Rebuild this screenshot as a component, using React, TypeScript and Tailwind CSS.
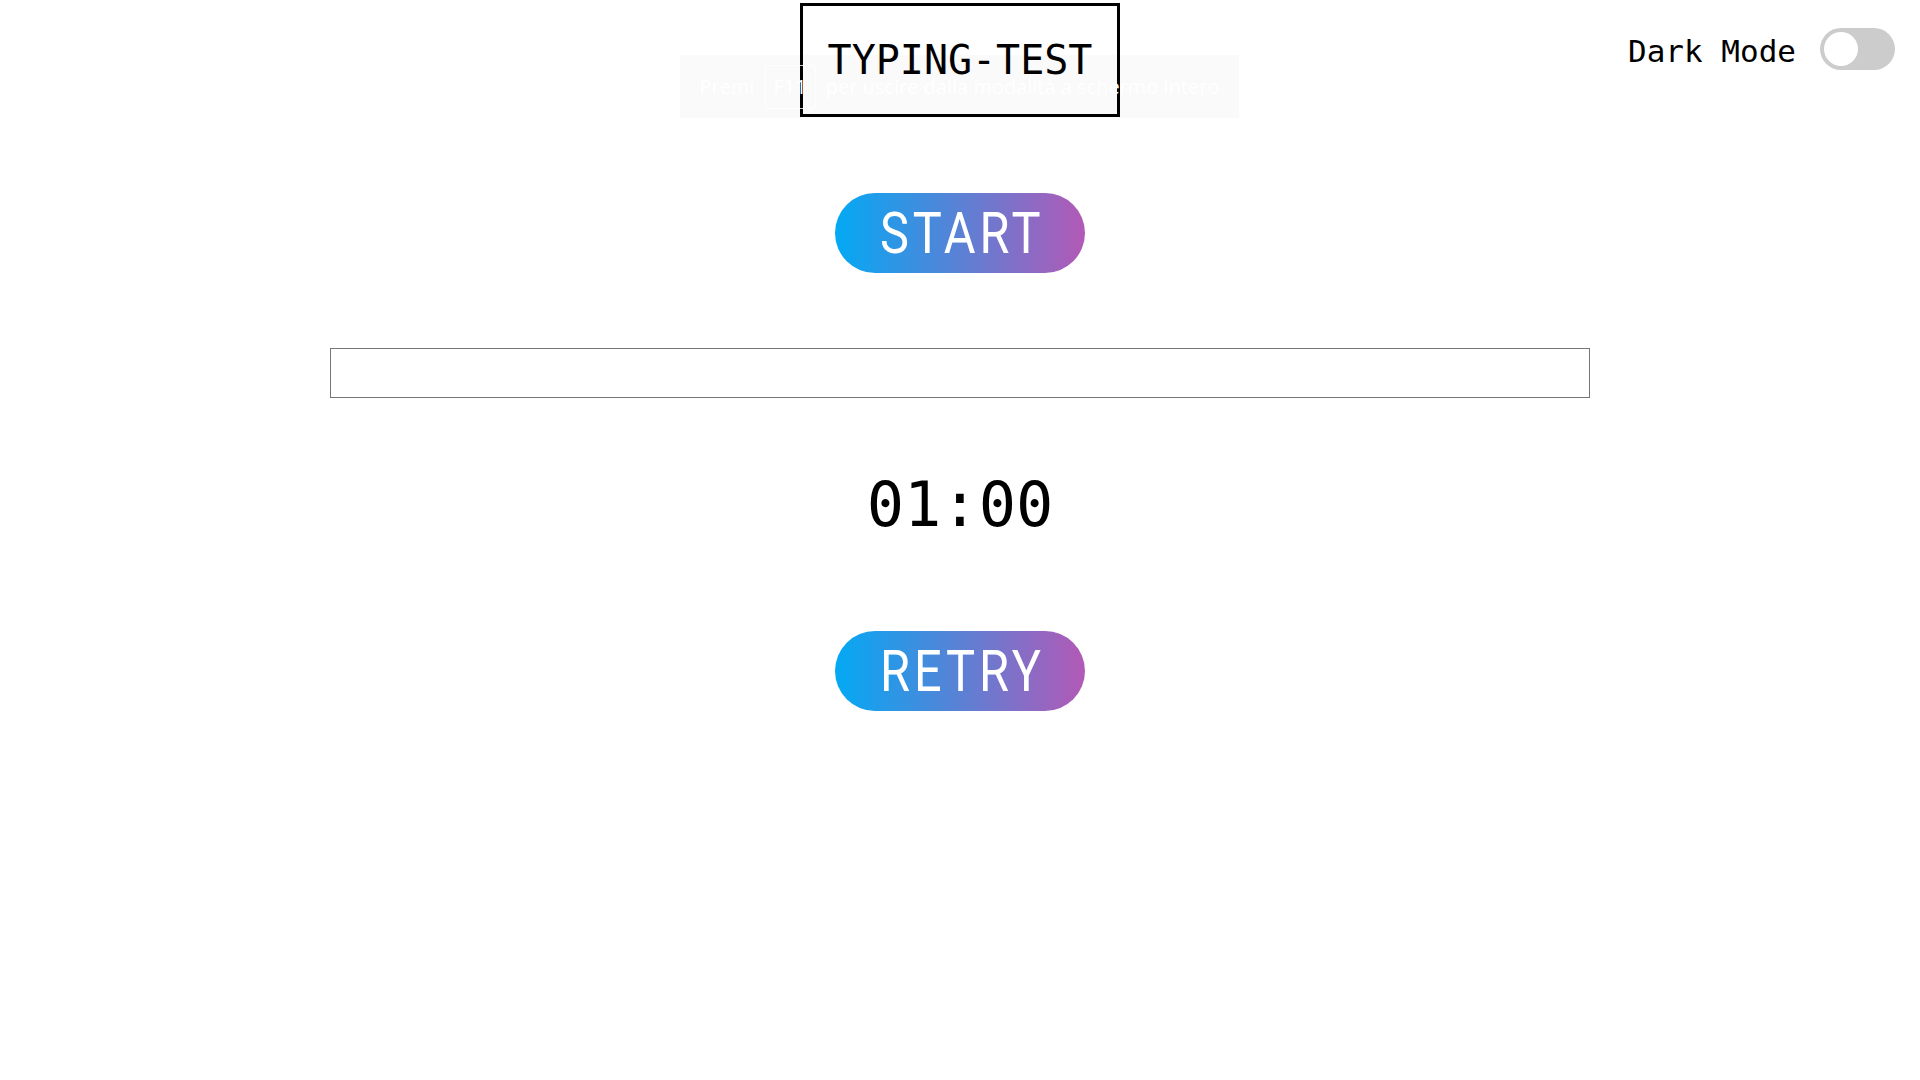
import { useState } from "react";

const mono = "font-['DejaVu_Sans_Mono','Liberation_Mono',monospace]";

function GradientButton({ label }: { label: string }) {
  return (
    <button className="flex h-[80px] w-[250px] items-center justify-center rounded-full bg-[linear-gradient(to_right,#03a9f4,#b259b6)] text-white">
      <span className="inline-block scale-x-[0.84] pl-[0.08em] font-['Roboto',sans-serif] text-[58px] leading-none tracking-[0.08em]">
        {label}
      </span>
    </button>
  );
}

export default function App() {
  const [dark, setDark] = useState(false);

  return (
    <div className={`relative min-h-screen bg-white text-black ${mono}`}>
      {/* fullscreen notice left by the browser */}
      <div className="pointer-events-none absolute left-[680px] top-[55px] z-10 flex h-[63px] w-[559px] items-center justify-center gap-[10px] bg-black/[0.02] font-['Open_Sans',sans-serif] text-[20px] text-white">
        <span>Premi</span>
        <span className="rounded-[3px] border border-white/80 px-[8px] py-[6px]">F11</span>
        <span>per uscire dalla modalità a schermo intero</span>
      </div>

      {/* dark mode switch */}
      <div className="absolute right-[25px] top-[28px] flex items-center gap-[24px]">
        <span className="translate-y-[2px] text-[31px] leading-none">Dark Mode</span>
        <button
          onClick={() => setDark(!dark)}
          className="flex h-[42px] w-[75px] items-center rounded-full bg-[#cccccc] px-[4px]"
        >
          <span className="h-[34px] w-[34px] rounded-full bg-white" />
        </button>
      </div>

      <div className="flex flex-col items-center pt-[3px]">
        <h1 className="flex h-[114px] w-[320px] items-center justify-center border-[3px] border-black text-[40px] leading-none">
          TYPING-TEST
        </h1>

        <div className="mt-[76px]">
          <GradientButton label="START" />
        </div>

        <input
          type="text"
          className="mt-[75px] h-[50px] w-[1260px] border border-[#767676] bg-white px-2 text-[20px] outline-none"
        />

        <div className="mt-[76px] h-[62px] text-[62px] leading-[62px]">01:00</div>

        <div className="mt-[95px]">
          <GradientButton label="RETRY" />
        </div>
      </div>
    </div>
  );
}
